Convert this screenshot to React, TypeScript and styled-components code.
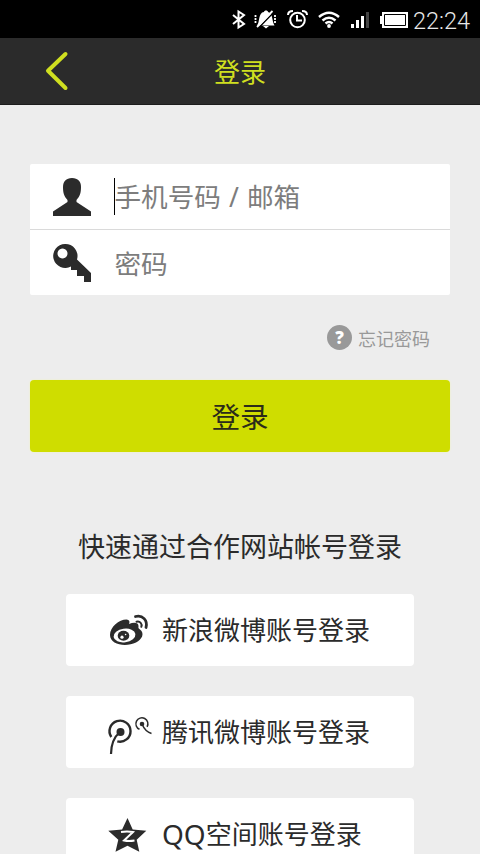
import React from 'react';
import styled, { createGlobalStyle } from 'styled-components';

const GlobalStyle = createGlobalStyle`
  * { box-sizing: border-box; }
  body { margin: 0; background: #ededed; overflow: hidden; }
`;

const Screen = styled.div`
  width: 480px;
  height: 854px;
  overflow: hidden;
  display: flex;
  flex-direction: column;
  background: #ededed;
  color: #2b2b2b;
  font-family: "Noto Sans", "Noto Sans CJK SC", sans-serif;
  white-space: nowrap;
`;

const StatusBar = styled.div`
  height: 38px;
  flex: none;
  background: #000;
  color: #fff;
  display: flex;
  justify-content: flex-end;
`;

const StatusIcons = styled.svg`
  width: 182px;
  height: 38px;
  flex: none;
`;

const Clock = styled.span`
  width: 68px;
  flex: none;
  padding-left: 1px;
  font: 300 23.5px/42px Roboto, sans-serif;
  color: #e8e8e8;
`;

const Header = styled.header`
  height: 67px;
  flex: none;
  background: #2b2b2b;
  border-bottom: 1px solid #1c1c1c;
  display: grid;
  grid-template-columns: 112px 1fr 112px;
  align-items: center;
  color: #cfdf20;
`;

const BackButton = styled.button`
  border: 0;
  padding: 0 0 0 44px;
  background: none;
  display: flex;
`;

const Title = styled.h1`
  margin: 0;
  padding-top: 2px;
  text-align: center;
  font-size: 26px;
  line-height: 64px;
  font-weight: 400;
`;

const Form = styled.form`
  flex: none;
  margin: 59px 30px 0;
  display: flex;
  flex-direction: column;
`;

const Fields = styled.div`
  background: #fff;
  border-radius: 2px;
  height: 131px;
`;

const Field = styled.label<{ $divided?: boolean }>`
  height: 66px;
  display: flex;
  align-items: center;
  padding-left: 22px;
  border-bottom: ${p => (p.$divided ? '1px solid #dadada' : '0')};
`;

const FieldIcon = styled.svg`
  width: 40px;
  height: 40px;
  flex: none;
`;

const Caret = styled.span<{ $active?: boolean }>`
  width: 1px;
  height: 37px;
  margin-left: 22px;
  background: ${p => (p.$active ? '#000' : 'transparent')};
`;

const Placeholder = styled.span`
  margin-left: -0.5px;
  padding-top: 1px;
  font-size: 26.6px;
  line-height: 40px;
  word-spacing: 1.2px;
  color: #7d7d7d;
`;

const Forgot = styled.div`
  height: 85px;
  display: flex;
  align-items: center;
  justify-content: flex-end;
  gap: 6px;
  padding-right: 20px;
  color: #999;
  font-size: 18px;
`;

const HelpBadge = styled.span`
  width: 25px;
  height: 25px;
  border-radius: 50%;
  background: #999;
  color: #fff;
  font: 800 17px/25px "Open Sans", sans-serif;
  text-align: center;
`;

const Submit = styled.button`
  height: 72px;
  border: 0;
  border-radius: 4px;
  padding: 0;
  background: #cfdd00;
  box-shadow: 0 0 2px #f2f6b8;
  color: #2b2b1a;
  font: 400 28.6px/72px "Noto Sans CJK SC", sans-serif;
`;

const Partners = styled.section`
  flex: none;
  margin-top: 75px;
  display: flex;
  flex-direction: column;
  align-items: center;
  gap: 30px;
`;

const PartnerTitle = styled.h2`
  margin: 0 0 -3px;
  height: 40px;
  font-size: 27px;
  line-height: 40px;
  font-weight: 400;
`;

const PartnerButton = styled.button`
  width: 348px;
  height: 72px;
  flex: none;
  padding: 0 0 0 38px;
  border: 0;
  border-radius: 4px;
  background: #fff;
  color: #2b2b2b;
  display: flex;
  align-items: center;
  font: 400 26px/72px "Noto Sans", "Noto Sans CJK SC", sans-serif;
`;

const PartnerIcon = styled.svg`
  width: 52px;
  height: 44px;
  margin-right: 6px;
  flex: none;
`;

const Latin = styled.span`
  font-size: 28px;
`;

export default function App() {
  return (
    <>
      <GlobalStyle />
      <Screen>
        <StatusBar>
          <StatusIcons viewBox="230 0 182 38" fill="none" stroke="#fff">
            <path d="M233 15l11 9-5.500 3.500V11.500l5.500 3.500-11 9" strokeWidth="2" />
            <path d="M257 25.500c3-3 1-13 7-13.500 0-2 4-2 4 0 5 1 3.500 8 6.500 13.500zM263 26h6l-3 2.500z" fill="#fff" stroke="none" />
            <path d="M258.500 28L274 12" stroke="#000" strokeWidth="1.500" />
            <path d="M257 27L272.500 11" strokeWidth="1.800" />
            <path d="M255.500 15v9M275 15v9" strokeWidth="1.800" strokeDasharray="2 1" />
            <circle cx="297.500" cy="20" r="7.300" strokeWidth="2" />
            <path d="M297 15v5.500h5M288 15c0-3 2-4 5-4M307 15c0-3-2-4-5-4" strokeWidth="2" />
            <path d="M319 17q10-8.500 20 0M322.500 20.500q6.500-5.500 13 0M325.500 23.500q3.500-3 7 0" strokeWidth="2.500" />
            <circle cx="329" cy="26" r="1.900" fill="#fff" stroke="none" />
            <path d="M351 24h3v4h-3zM356 20h3v8h-3zM361 16h3v12h-3z" fill="#fff" stroke="none" />
            <path d="M366 12h3v16h-3z" fill="#444" stroke="none" />
            <path d="M382 12h26v16h-26v-4h-2v-8h2z" fill="#fff" stroke="none" />
            <path d="M384.500 14.500h21v11h-21z" stroke="#000" />
          </StatusIcons>
          <Clock>22:24</Clock>
        </StatusBar>

        <Header>
          <BackButton aria-label="返回" type="button">
            <svg width="26" height="42" viewBox="0 0 26 42" fill="none" stroke="#cfdf20" strokeWidth="4" strokeLinecap="round" strokeLinejoin="round">
              <path d="M21.500 4L4 20.800 21.500 38" />
            </svg>
          </BackButton>
          <Title>登录</Title>
        </Header>

        <Form>
          <Fields>
            <Field $divided>
              <FieldIcon viewBox="52 177 40 40" fill="#2b2b2b">
                <path d="M72 178c6 0 9 3.500 9 9 0 6-1 9-4.500 13v2l14.500 9.500V216H53v-4.500L67.500 202v-2c-3.500-4-4.500-7-4.500-13 0-5.500 3-9 9-9z" />
              </FieldIcon>
              <Caret $active />
              <Placeholder>手机号码 / 邮箱</Placeholder>
            </Field>
            <Field>
              <FieldIcon viewBox="52 243 40 40">
                <path fillRule="evenodd" fill="#2b2b2b" d="M65 244a12 12 0 0 1 12 15.500L91 273v9h-7v-6h-7v-6h-6v-3.500A12 12 0 1 1 65 244zM62.500 248.500a5 5 0 1 0 .01 0z" />
              </FieldIcon>
              <Caret />
              <Placeholder>密码</Placeholder>
            </Field>
          </Fields>
          <Forgot>
            <HelpBadge>?</HelpBadge>
            <span>忘记密码</span>
          </Forgot>
          <Submit type="button">登录</Submit>
        </Form>

        <Partners>
          <PartnerTitle>快速通过合作网站帐号登录</PartnerTitle>
          <PartnerButton>
            <PartnerIcon viewBox="104 608 52 44" fill="#2b2b2b">
              <path d="M110 635c0-8 9-15.500 16.500-15.500 3 .3 3.500 2.500 2.500 4.500 5-2 9.500-1.500 9.500 2 0 2-.5 2 1.500 3.500 5 4 2 10-4 13-10 5-26 2.500-26-7.500z" />
              <ellipse cx="124.500" cy="635.500" rx="11" ry="6.800" fill="#fff" transform="rotate(-8 124.500 635.500)" />
              <ellipse cx="123.500" cy="635.800" rx="5.800" ry="5" />
              <circle cx="122" cy="637.200" r="1.600" fill="#fff" />
              <circle cx="125.600" cy="634.500" r=".8" fill="#fff" />
              <path d="M135.500 616.500c7-2 12.500 4 10.500 11" fill="none" stroke="#2b2b2b" strokeWidth="2.800" strokeLinecap="round" />
              <path d="M136.500 621.800c3.500-1 6 2 4.800 5" fill="none" stroke="#2b2b2b" strokeWidth="2" strokeLinecap="round" />
            </PartnerIcon>
            新浪微博账号登录
          </PartnerButton>
          <PartnerButton>
            <PartnerIcon viewBox="104 710 52 44" fill="none" stroke="#2b2b2b">
              <path d="M111.300 737a10.500 10.500 0 1 1 6 4.300" strokeWidth="2.400" />
              <circle cx="120.500" cy="732" r="4" fill="#2b2b2b" stroke="none" />
              <path d="M120 732c-6 5-9 12-9 22.500" strokeWidth="2.200" />
              <path d="M139.500 729.300a6 6 0 1 1 7.600-2.500" strokeWidth="1.500" />
              <circle cx="142" cy="724" r="2.300" fill="#2b2b2b" stroke="none" />
              <path d="M142 724c2 5 5 8 9.500 9.500" strokeWidth="1.500" />
            </PartnerIcon>
            腾讯微博账号登录
          </PartnerButton>
          <PartnerButton>
            <PartnerIcon viewBox="104 812 52 44" fill="#2b2b2b">
              <path d="M127.500 818l5.200 11.500 13.600 1.200-9.600 9 2.600 12-11.800-6-12 6 2.800-12-10-9 13.800-1.200z" />
              <path d="M121 832q6-1 12 0l-9 8.500q5 1 10.500 0" fill="none" stroke="#fff" strokeWidth="1.900" />
            </PartnerIcon>
            <Latin>QQ</Latin>空间账号登录
          </PartnerButton>
        </Partners>
      </Screen>
    </>
  );
}
